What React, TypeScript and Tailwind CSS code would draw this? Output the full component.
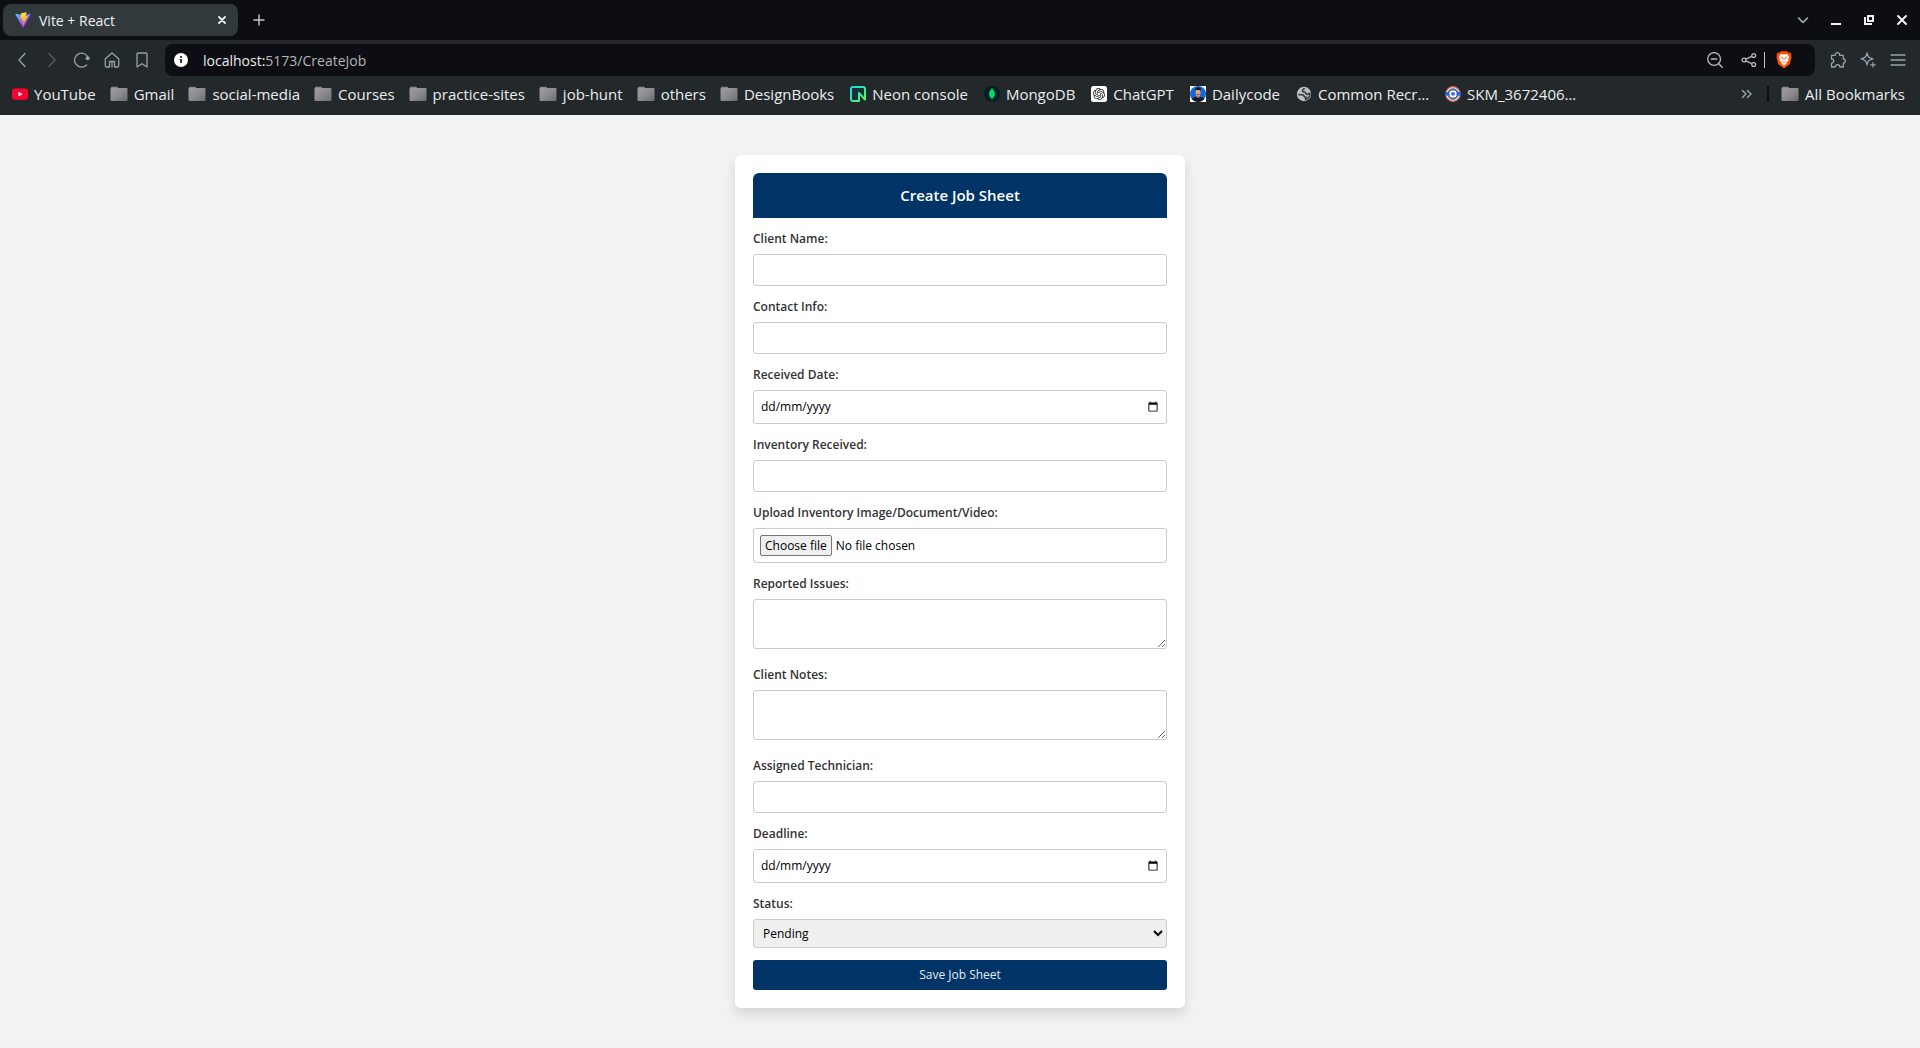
import { useState, type ReactNode } from "react";

function Folder() {
  return (
    <svg width="18" height="16" viewBox="0 0 18 16" className="shrink-0">
      <defs>
        <linearGradient id="folder" x1="0" y1="0" x2="1" y2="1">
          <stop offset="0" stopColor="#a09ea4" />
          <stop offset="0.5" stopColor="#8c8b90" />
          <stop offset="1" stopColor="#6c6b6d" />
        </linearGradient>
      </defs>
      <path d="M1 2.5V1.6C1 1 1.5.8 2 .8h5c.6 0 .8.3 1 1l.2.7z" fill="#8a8880" />
      <rect x="0.5" y="2" width="17" height="13" rx="1.2" fill="url(#folder)" />
    </svg>
  );
}

function ViteLogo() {
  return (
    <svg width="16" height="16" viewBox="0 0 410 404" className="shrink-0">
      <defs>
        <linearGradient id="viteA" x1="6" y1="33" x2="235" y2="344" gradientUnits="userSpaceOnUse">
          <stop stopColor="#41D1FF" />
          <stop offset="1" stopColor="#BD34FE" />
        </linearGradient>
        <linearGradient id="viteB" x1="194" y1="9" x2="236" y2="293" gradientUnits="userSpaceOnUse">
          <stop stopColor="#FFEA83" />
          <stop offset="0.08" stopColor="#FFDD35" />
          <stop offset="1" stopColor="#FFA800" />
        </linearGradient>
      </defs>
      <path d="M399.641 59.525 215.643 388.545c-3.799 6.793-13.559 6.833-17.415.073L10.582 59.556C6.38 52.19 12.68 43.267 21.028 44.76l184.195 32.923a10 10 0 0 0 3.545-.006l180.343-32.87c8.32-1.518 14.649 7.337 10.53 14.719z" fill="url(#viteA)" />
      <path d="M292.965 1.574 156.801 28.255a5 5 0 0 0-4.03 4.611l-8.376 141.464c-.197 3.332 2.863 5.918 6.115 5.168l37.91-8.749c3.547-.818 6.752 2.306 6.023 5.873l-11.263 55.153c-.758 3.712 2.727 6.886 6.352 5.785l23.415-7.114c3.63-1.102 7.118 2.081 6.35 5.796l-17.899 86.633c-1.12 5.419 6.088 8.374 9.094 3.728l2.008-3.103 110.954-221.428c1.858-3.707-1.346-7.935-5.418-7.15l-39.022 7.532c-3.667.707-6.787-2.708-5.752-6.296l25.469-88.291c1.036-3.594-2.095-7.012-5.766-6.293z" fill="url(#viteB)" />
    </svg>
  );
}

const icons: Record<string, ReactNode> = {
  youtube: (
    <svg width="16" height="16" viewBox="0 0 16 16" className="shrink-0">
      <rect x="0" y="2.4" width="16" height="11.4" rx="3" fill="#ff0033" />
      <path d="M6.4 5.7v4.8l4.2-2.4z" fill="#fff" />
    </svg>
  ),
  neon: (
    <svg width="16" height="16" viewBox="0 0 16 16" className="shrink-0">
      <defs>
        <linearGradient id="neon" x1="0" y1="0" x2="1" y2="1">
          <stop offset="0" stopColor="#12dfe6" />
          <stop offset="0.5" stopColor="#32e8a4" />
          <stop offset="1" stopColor="#63f655" />
        </linearGradient>
      </defs>
      <path d="M9 15H2.8A1.8 1.8 0 0 1 1 13.2V2.8A1.8 1.8 0 0 1 2.8 1h10.4A1.8 1.8 0 0 1 15 2.8V13.6L9 6.8z" fill="#173038" stroke="url(#neon)" strokeWidth="2" strokeLinejoin="round" />
    </svg>
  ),
  mongo: (
    <svg width="16" height="16" viewBox="0 0 16 16" className="shrink-0">
      <circle cx="8" cy="8" r="8" fill="#001e2b" />
      <path d="M8 2.3C9.5 4 11 5.8 10.9 8.2 10.8 10.4 9.3 11.7 8.4 12.3L8.2 13.6H7.8L7.6 12.3C6.7 11.7 5.2 10.4 5.1 8.2 5 5.8 6.5 4 8 2.3z" fill="#00ed64" />
      <path d="M8 2.3V13.6" stroke="#00a84c" strokeWidth="0.8" />
    </svg>
  ),
  gpt: (
    <svg width="16" height="16" viewBox="0 0 32 32" className="shrink-0">
      <rect width="32" height="32" rx="5" fill="#fff" />
      <g transform="translate(4 4)" fill="#1f1f1f">
        <path d="M22.282 9.821a5.985 5.985 0 0 0-.516-4.91 6.046 6.046 0 0 0-6.51-2.9A6.065 6.065 0 0 0 4.981 4.182a5.985 5.985 0 0 0-3.998 2.9 6.046 6.046 0 0 0 .743 7.097 5.98 5.98 0 0 0 .51 4.911 6.051 6.051 0 0 0 6.515 2.9A5.985 5.985 0 0 0 13.26 24a6.056 6.056 0 0 0 5.772-4.206 5.99 5.99 0 0 0 3.997-2.9 6.056 6.056 0 0 0-.747-7.073zM13.26 22.43a4.476 4.476 0 0 1-2.876-1.04l.141-.081 4.779-2.758a.795.795 0 0 0 .392-.681v-6.737l2.02 1.168a.071.071 0 0 1 .038.052v5.583a4.504 4.504 0 0 1-4.494 4.494zM3.6 18.304a4.47 4.47 0 0 1-.535-3.014l.142.085 4.783 2.759a.771.771 0 0 0 .78 0l5.843-3.369v2.332a.08.08 0 0 1-.033.062L9.74 19.95a4.5 4.5 0 0 1-6.14-1.646zM2.34 7.896a4.485 4.485 0 0 1 2.366-1.973V11.6a.766.766 0 0 0 .388.676l5.815 3.355-2.02 1.168a.076.076 0 0 1-.071 0l-4.83-2.786A4.504 4.504 0 0 1 2.34 7.872zm16.597 3.855-5.833-3.387L15.119 7.2a.076.076 0 0 1 .071 0l4.83 2.791a4.494 4.494 0 0 1-.676 8.105v-5.678a.79.79 0 0 0-.407-.667zm2.01-3.023-.141-.085-4.774-2.782a.776.776 0 0 0-.785 0L9.409 9.23V6.897a.066.066 0 0 1 .028-.061l4.83-2.787a4.5 4.5 0 0 1 6.68 4.66zM8.307 12.863l-2.02-1.164a.08.08 0 0 1-.038-.057V6.075a4.5 4.5 0 0 1 7.375-3.453l-.142.08L8.704 5.46a.795.795 0 0 0-.393.681zm1.097-2.365 2.602-1.5 2.607 1.5v2.999l-2.597 1.5-2.607-1.5z" />
      </g>
    </svg>
  ),
  daily: (
    <svg width="16" height="16" viewBox="0 0 16 16" className="shrink-0">
      <rect width="16" height="16" fill="#fff" />
      <circle cx="8" cy="8" r="8" fill="#1266d6" />
      <path d="M1.8 13C2.8 11.6 4.5 11 6.2 10.7h3.6c2 .2 3.6 1 4.5 2.3A8 8 0 0 1 8 16a8 8 0 0 1-6.2-3z" fill="#15161a" />
      <path d="M6.6 9h2.9v2.3l-1.4.8-1.5-.8z" fill="#b57f68" />
      <path d="M5.6 4h4.9v3.4c0 1.8-1.1 3-2.4 3s-2.5-1.2-2.5-3z" fill="#d9a48a" />
      <path d="M5.2 5.4C4.8 2.8 6 1.3 8.2 1.3s3.2 1.5 2.6 4.1l-.6-1.5H6z" fill="#1b1413" />
      <path d="M6.7 8.6h2.7" stroke="#5b3428" strokeWidth="0.8" />
    </svg>
  ),
  globe: (
    <svg width="16" height="16" viewBox="0 0 16 16" className="shrink-0">
      <circle cx="8" cy="8" r="7.2" fill="#bdc1c6" />
      <path d="M8.5 2.2c-.6 1.4-2.3 1.2-2 2.8.2 1.2 1.5.5 2.5 1.1 1.1.7.4 2 1.6 2.2 1.4.2 2-1.3 3.4-.8-.1 2.7-1.7 4.9-4.3 5.9-.7-.4-.2-1.3.1-2.1-2.1.4-1.3-2.3-3.2-2.500L2.200 8.500" fill="none" stroke="#3a4044" strokeWidth="1.7" />
    </svg>
  ),
  skm: (
    <svg width="16" height="16" viewBox="0 0 16 16" className="shrink-0">
      <circle cx="8" cy="8" r="7.4" fill="#dfe4ec" stroke="#d9583f" strokeWidth="1.1" />
      <circle cx="8" cy="8" r="5.2" fill="#4c6479" stroke="#3d71a8" strokeWidth="1" />
      <path d="M0 6h16v3.6H0z" fill="#2563eb" />
      <rect x="4.5" y="4.5" width="7" height="7" rx="2.5" fill="#fff" />
      <rect x="6.2" y="6.2" width="3.6" height="3.2" rx="0.8" fill="#2c68e8" />
    </svg>
  ),
};

type Bookmark = { name: string; icon?: string };

const folders: Bookmark[] = [
  { name: "YouTube", icon: "youtube" },
  { name: "Gmail" },
  { name: "social-media" },
  { name: "Courses" },
  { name: "practice-sites" },
  { name: "job-hunt" },
  { name: "others" },
  { name: "DesignBooks" },
];

const sites: Bookmark[] = [
  { name: "Neon console", icon: "neon" },
  { name: "MongoDB", icon: "mongo" },
  { name: "ChatGPT", icon: "gpt" },
  { name: "Dailycode", icon: "daily" },
  { name: "Common Recr…", icon: "globe" },
  { name: "SKM_3672406…", icon: "skm" },
];

function Line({ d, size = 16, className = "", w = 1.3 }: { d: string; size?: number; className?: string; w?: number }) {
  return (
    <svg width={size} height={size} viewBox="0 0 16 16" fill="none" stroke="currentColor" strokeWidth={w} strokeLinecap="round" strokeLinejoin="round" className={className}>
      <path d={d} />
    </svg>
  );
}

function IconButton({ label, children, className = "" }: { label: string; children: ReactNode; className?: string }) {
  return (
    <button type="button" aria-label={label} className={`flex size-[30px] shrink-0 items-center justify-center ${className}`}>
      {children}
    </button>
  );
}

function TabStrip() {
  return (
    <div className="flex h-10 items-center bg-[#0d0e13] px-[3px]">
      <div className="flex h-8 w-[235px] items-center rounded-lg bg-[#31393d] pr-2 pl-3 text-[14px] text-[#f0f1f2]">
        <ViteLogo />
        <span className="ml-2 flex-1">Vite + React</span>
        <button type="button" aria-label="Close tab" className="flex size-4 items-center justify-center">
          <Line d="M5 5l6 6M11 5l-6 6" w={1.8} className="shrink-0" />
        </button>
      </div>
      <IconButton label="New tab" className="ml-[6px] text-[#c4c8cb]">
        <Line d="M8 3v10M3 8h10" w={1.4} />
      </IconButton>
      <div className="ml-auto flex items-center gap-[3px] text-[#f0f1f2]">
        <IconButton label="Search tabs" className="text-[#9fb0b8]">
          <Line d="M3.5 6L8 10.5 12.5 6" w={1.6} />
        </IconButton>
        <IconButton label="Minimise">
          <svg width="16" height="16" viewBox="0 0 16 16"><path d="M3 11h10v2H3z" fill="currentColor" /></svg>
        </IconButton>
        <IconButton label="Restore">
          <svg width="16" height="16" viewBox="0 0 16 16" fill="none" stroke="currentColor" strokeWidth="2">
            <path d="M7 4h5v5H7zM4 5v7h7" />
          </svg>
        </IconButton>
        <IconButton label="Close">
          <Line d="M4 4l8 8M12 4l-8 8" w={2} />
        </IconButton>
      </div>
    </div>
  );
}

function Toolbar() {
  return (
    <div className="flex h-10 items-center bg-[#23282b] px-[7px] text-[#94a3ab]">
      <IconButton label="Back"><Line d="M11 1.5L5 8l6 6.5" /></IconButton>
      <IconButton label="Forward" className="text-[#535c61]"><Line d="M5 1.5L11 8l-6 6.5" /></IconButton>
      <IconButton label="Reload">
        <svg width="16" height="16" viewBox="0 0 16 16" fill="none" stroke="currentColor" strokeWidth="1.3" strokeLinecap="round">
          <path d="M14.3 6.2A7 7 0 1 0 12.6 13" />
          <circle cx="13.6" cy="6.3" r="2" fill="currentColor" stroke="none" />
        </svg>
      </IconButton>
      <IconButton label="Home"><Line d="M1.3 6.7L8 1l6.7 5.7v7A1.2 1.2 0 0 1 13.5 15H10.5V9.5h-5V15H2.5A1.2 1.2 0 0 1 1.3 13.7zM8 9.5V15" /></IconButton>
      <IconButton label="Bookmark this page"><Line d="M3 15V2.2A1.2 1.2 0 0 1 4.2 1h7.6A1.2 1.2 0 0 1 13 2.2V15l-5-3.3z" /></IconButton>
      <div className="mr-2 ml-2 flex h-8 min-w-0 flex-1 items-center rounded-lg bg-[#0d0e13] pr-4 pl-[9px]">
        <svg width="14" height="14" viewBox="0 0 14 14" className="shrink-0">
          <circle cx="7" cy="7" r="7" fill="#fff" />
          <path d="M6 3h2v2H6zM5.5 6H8v4H6V7.2h-.5z" fill="#3a3f42" />
        </svg>
        <div className="ml-[15px] flex-1 text-[14px] text-[#b3b5b8]">
          <span className="text-[#eceded]">localhost:</span>5173/CreateJob
        </div>
        <div className="flex items-center text-[#b9bcbe]">
          <IconButton label="Zoom"><Line d="M12 12L15.3 15.3M4.3 7h5.4M13.5 7A6.4 6.4 0 1 1 .7 7a6.4 6.4 0 0 1 12.8 0z" /></IconButton>
          <IconButton label="Share" className="ml-1">
            <svg width="16" height="16" viewBox="0 0 16 16" fill="none" stroke="currentColor" strokeWidth="1.3">
              <circle cx="3" cy="8" r="1.9" />
              <circle cx="12.7" cy="3.5" r="1.9" />
              <circle cx="12.7" cy="12.5" r="1.9" />
              <path d="M4.8 7.2l6-2.8M4.8 8.8l6 2.8" />
            </svg>
          </IconButton>
          <span className="h-4 w-px bg-[#c7c9ca]" />
          <IconButton label="Brave Shields" className="ml-1">
            <svg width="16" height="18" viewBox="0 0 17 19">
              <path d="M5 .3h7l1.5 1.5L15 1.600l1.500 2.200-.4 1.500.4 1.500-2 7.300-6 4.400-6-4.400-2-7.300.4-1.500-.4-1.500L2 1.600l1.500.2z" fill="#ff5000" />
              <path d="M8.500 3.600l3.300-.5 2.200 3-1 2.500.3 1.500-2.600 2.200.4 1.200-2.600 2.100-2.600-2.100.4-1.200-2.600-2.200.3-1.500-1-2.500 2.200-3z" fill="#fff" />
              <path d="M4.800 6.200l2.200.6-.1 1.600M12.200 6.200l-2.200.6.1 1.600M6.900 11.400l1.600.8 1.600-.8M8.500 8v2" fill="none" stroke="#ff5000" strokeWidth="0.9" />
            </svg>
          </IconButton>
        </div>
      </div>
      <IconButton label="Extensions">
        <Line d="M1.5 3.3H5.2C5 1.7 6 .7 7.4.7S9.8 1.7 9.600 3.300H13.300V7C14.600 7 15.400 7.900 15.400 9.100S14.600 11.200 13.300 11.200V15H9.800C9.800 13.500 9 12.700 7.600 12.700S5.300 13.500 5.300 15H1.500V11.200C3 11.200 3.700 10.300 3.700 9.100S3 7 1.500 7z" />
      </IconButton>
      <IconButton label="Leo AI">
        <Line d="M7 .8C7.7 4.8 9 6 13 6.9 9 7.8 7.7 9 7 13 6.3 9 5 7.8 1 6.9 5 6 6.3 4.8 7 .8zM13 10.6V15M10.8 12.8h4.4" />
      </IconButton>
      <IconButton label="Menu"><Line d="M1 3h14M1 8h14M1 13h14" w={1.3} /></IconButton>
    </div>
  );
}

function BookmarkLink({ name, icon }: Bookmark) {
  return (
    <a href="#" className="flex items-center gap-[6px]">
      {icon ? icons[icon] : <Folder />}
      {name}
    </a>
  );
}

function BookmarkBar() {
  return (
    <nav className="flex h-[35px] items-center bg-[#23282b] pr-[15px] pb-2 pl-3 text-[15px] leading-5 whitespace-nowrap text-[#eceded]">
      <div className="mr-4 flex items-center gap-[14px]">
        {folders.map((b) => <BookmarkLink key={b.name} {...b} />)}
      </div>
      <div className="flex items-center gap-4">
        {sites.map((b) => <BookmarkLink key={b.name} {...b} />)}
      </div>
      <button type="button" aria-label="More bookmarks" className="mr-3 ml-auto text-[#94a3ab]">
        <Line d="M3.5 4.5L7 8l-3.5 3.5M8.5 4.5L12 8l-3.500 3.500" w={1.5} />
      </button>
      <span className="mr-3 h-4 w-[2px] bg-[#0d0e13]" />
      <BookmarkLink name="All Bookmarks" />
    </nav>
  );
}

const field = "block w-full rounded-[3px] border border-[#ccc] bg-white text-[12px] text-black";

function Field({ id, label, children }: { id: string; label: string; children: ReactNode }) {
  return (
    <div className="mt-3">
      <label htmlFor={id} className="mb-[6px] block text-[12px] leading-[18px] font-semibold text-[#333]">
        {label}
      </label>
      {children}
    </div>
  );
}

function TextField({ id, label }: { id: string; label: string }) {
  return (
    <Field id={id} label={label}>
      <input id={id} type="text" className={`${field} h-8 px-[7px]`} />
    </Field>
  );
}

function DateField({ id, label }: { id: string; label: string }) {
  const [value, setValue] = useState("");
  const shown = value ? value.split("-").reverse().join("/") : "dd/mm/yyyy";
  return (
    <Field id={id} label={label}>
      <div className="relative">
        <input
          id={id}
          type="date"
          value={value}
          onChange={(e) => setValue(e.target.value)}
          className={`${field} h-[34px] px-[5px] [&::-webkit-datetime-edit]:opacity-0`}
        />
        <span className="pointer-events-none absolute inset-y-0 left-2 flex items-center text-[12px]">{shown}</span>
      </div>
    </Field>
  );
}

function FileField({ id, label }: { id: string; label: string }) {
  const [file, setFile] = useState("No file chosen");
  return (
    <Field id={id} label={label}>
      <div className={`${field} flex! h-[35px] items-center gap-1 px-[6px]`}>
        <input id={id} type="file" className="sr-only" onChange={(e) => setFile(e.target.files?.[0]?.name ?? "No file chosen")} />
        <label htmlFor={id} className="rounded-[2px] border border-[#767676] bg-[#efefef] px-1 leading-[19px]">
          Choose file
        </label>
        <span>{file}</span>
      </div>
    </Field>
  );
}

function AreaField({ id, label }: { id: string; label: string }) {
  return (
    <Field id={id} label={label}>
      <textarea id={id} className={`${field} mb-[17px] h-[50px] resize p-[7px]`} />
    </Field>
  );
}

export default function App() {
  return (
    <div className="flex min-h-screen flex-col bg-[#f2f2f2] font-['Open_Sans','Noto_Sans',sans-serif]">
      <header>
        <TabStrip />
        <Toolbar />
        <BookmarkBar />
      </header>
      <main className="flex flex-1 items-start justify-center px-4 py-10">
        <form
          className="w-full max-w-[450px] rounded-md bg-white p-[18px] shadow-[0_6px_12px_rgba(0,0,0,0.12)]"
          onSubmit={(e) => e.preventDefault()}
        >
          <h1 className="rounded-t-md bg-[#003366] py-3 text-center text-[15px] leading-[21px] font-semibold text-white">Create Job Sheet</h1>
          <TextField id="client" label="Client Name:" />
          <TextField id="contact" label="Contact Info:" />
          <DateField id="received" label="Received Date:" />
          <TextField id="inventory" label="Inventory Received:" />
          <FileField id="upload" label="Upload Inventory Image/Document/Video:" />
          <AreaField id="issues" label="Reported Issues:" />
          <AreaField id="notes" label="Client Notes:" />
          <TextField id="technician" label="Assigned Technician:" />
          <DateField id="deadline" label="Deadline:" />
          <Field id="status" label="Status:">
            <select id="status" className={`${field} h-[29px] bg-[#efefef]! px-[5px]`} defaultValue="Pending">
              <option>Pending</option>
              <option>In Progress</option>
              <option>Completed</option>
            </select>
          </Field>
          <button type="submit" className="mt-3 block h-[30px] w-full rounded-[3px] bg-[#003366] text-[12px] text-[#e6ebf0]">
            Save Job Sheet
          </button>
        </form>
      </main>
    </div>
  );
}
